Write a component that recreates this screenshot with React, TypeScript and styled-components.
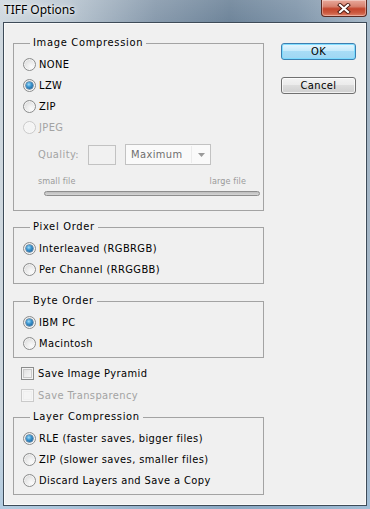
import React from 'react';
import styled, { createGlobalStyle } from 'styled-components';

const Global = createGlobalStyle`
  html, body { margin: 0; padding: 0; }
  body { width: 370px; height: 509px; overflow: hidden; background: #8a9db0; }
`;

const Window = styled.div`
  width: 370px;
  height: 509px;
  display: flex;
  flex-direction: column;
  box-sizing: border-box;
  background:
    linear-gradient(180deg, rgba(255,255,255,0.12) 0%, rgba(255,255,255,0) 30px),
    linear-gradient(90deg, #cfd8df 0%, #b8c5d0 18%, #8497aa 42%, #6a8197 62%, #7d93a8 80%, #a4b6c6 100%);
  font-family: "DejaVu Sans Condensed", "DejaVu Sans", sans-serif;
  font-stretch: condensed;
  font-size: 11px;
  letter-spacing: 0.4px;
  color: #000;
`;

const TitleBar = styled.div`
  height: 22px;
  display: flex;
  align-items: flex-start;
  flex: none;
`;

const Title = styled.div`
  font-family: "Noto Sans", sans-serif;
  font-stretch: normal;
  letter-spacing: 0;
  font-size: 12px;
  line-height: 20px;
  padding-left: 4px;
  color: #000;
  text-shadow: 0 0 6px rgba(255,255,255,0.9), 0 0 3px rgba(255,255,255,0.8);
  flex: 1;
`;

const CloseButton = styled.div`
  width: 46px;
  height: 17px;
  margin-right: 3px;
  box-sizing: border-box;
  border: 1px solid #5b2a22;
  border-top: none;
  border-radius: 0 0 4px 4px;
  background: linear-gradient(180deg, #e9a99b 0%, #d7826f 40%, #c4452c 55%, #cb5a40 80%, #e0826a 100%);
  box-shadow: inset 0 0 0 1px rgba(255,255,255,0.35);
  display: flex;
  align-items: center;
  justify-content: center;
`;

const Body = styled.div`
  flex: 1;
  display: flex;
  padding: 0 3px 3px 3px;
  background: linear-gradient(180deg, rgba(0,0,0,0) 0%, rgba(0,0,0,0) 80%, rgba(160,195,225,0.6) 100%);
`;

const Client = styled.div`
  flex: 1;
  display: flex;
  box-sizing: border-box;
  border: 1px solid #3e4b58;
  box-shadow: inset 0 0 0 1px #fafafa;
  background: #f0f0f0;
  padding: 13px 0 0 9px;
`;

const LeftCol = styled.div`
  width: 251px;
  display: flex;
  flex-direction: column;
`;

const RightCol = styled.div`
  margin-left: 17px;
  padding-top: 7px;
  display: flex;
  flex-direction: column;
  gap: 17px;
`;

const Button = styled.div<{ $default?: boolean }>`
  width: 75px;
  height: 17px;
  box-sizing: border-box;
  border-radius: 3px;
  border: 1px solid ${p => (p.$default ? '#3c7fb1' : '#707070')};
  background: ${p =>
    p.$default
      ? 'linear-gradient(180deg, #e8f6fd 0%, #c6eafb 45%, #a7dcf6 50%, #9fd6f2 100%)'
      : 'linear-gradient(180deg, #f3f3f3 0%, #ebebeb 45%, #dddddd 50%, #cfcfcf 100%)'};
  box-shadow: inset 0 0 0 1px ${p => (p.$default ? 'rgba(120,220,255,0.9)' : 'rgba(255,255,255,0.7)')};
  display: flex;
  align-items: center;
  justify-content: center;
  line-height: 13px;
`;

const Group = styled.fieldset<{ $gapTop?: number }>`
  margin: ${p => p.$gapTop ?? 0}px 0 0 0;
  padding: 0 0 0 9px;
  border: 1px solid #a3a3a3;
  min-width: 0;
`;

const Legend = styled.legend`
  margin-left: 7px;
  padding: 0 3px;
  line-height: 14px;
  height: 14px;
  letter-spacing: 0.7px;
`;

const Rows = styled.div<{ $bottom?: number }>`
  display: flex;
  flex-direction: column;
  padding-top: 4px;
  padding-bottom: ${p => p.$bottom ?? 3}px;
`;

const Row = styled.div<{ $disabled?: boolean }>`
  height: 21px;
  display: flex;
  align-items: center;
  gap: 3px;
  color: ${p => (p.$disabled ? '#a3a3a3' : '#000')};
  white-space: nowrap;
`;

const RadioOuter = styled.span<{ $disabled?: boolean }>`
  width: 13px;
  height: 13px;
  border-radius: 50%;
  box-sizing: border-box;
  flex: none;
  border: 1px solid ${p => (p.$disabled ? '#cacaca' : '#8b8c8c')};
  background: ${p =>
    p.$disabled
      ? '#f4f4f4'
      : 'radial-gradient(circle at 65% 70%, #fbfbfb 0%, #eeeeee 35%, #d2d2d2 100%)'};
  box-shadow: inset 0 0 0 1px ${p => (p.$disabled ? '#f7f7f7' : 'rgba(255,255,255,0.6)')};
  display: flex;
  align-items: center;
  justify-content: center;
`;

const RadioDot = styled.span`
  width: 7px;
  height: 7px;
  border-radius: 50%;
  background: radial-gradient(circle at 40% 35%, #9fdcf9 0%, #3a94cf 40%, #0f4f86 100%);
  box-shadow: 0 0 0 0.5px #1b4f7a;
`;

const CheckRows = styled.div`
  display: flex;
  flex-direction: column;
  padding-left: 8px;
  margin-top: 4px;
`;

const CheckRow = styled(Row)`
  height: 22px;
  gap: 4px;
`;

const CheckBox = styled.span<{ $disabled?: boolean }>`
  width: 13px;
  height: 13px;
  box-sizing: border-box;
  flex: none;
  border: 1px solid ${p => (p.$disabled ? '#cacaca' : '#8b8c8c')};
  background: ${p =>
    p.$disabled ? '#f4f4f4' : 'linear-gradient(135deg, #d9d9d9 0%, #ececec 50%, #fafafa 100%)'};
  box-shadow: inset 0 0 0 1px ${p => (p.$disabled ? '#f6f6f6' : '#f4f4f4')}, inset 0 0 0 2px ${p => (p.$disabled ? '#efefef' : '#c9c9c9')};
`;

const QualityRow = styled.div`
  display: flex;
  align-items: center;
  margin: 6px 0 0 15px;
  height: 21px;
  color: #a3a3a3;
`;

const QualityLabel = styled.span`
  width: 50px;
`;

const QualityInput = styled.span`
  width: 28px;
  height: 20px;
  box-sizing: border-box;
  border: 1px solid #c2c2c2;
  background: #f1f1f1;
`;

const Select = styled.div`
  margin-left: 9px;
  width: 86px;
  height: 21px;
  box-sizing: border-box;
  border: 1px solid #c2c2c2;
  background: #fafafa;
  display: flex;
  align-items: center;
  color: #6e6e6e;
`;

const SelectText = styled.span`
  flex: 1;
  padding-left: 5px;
  border-right: 1px solid #ececec;
  line-height: 17px;
`;

const SelectArrow = styled.span`
  width: 18px;
  display: flex;
  align-items: center;
  justify-content: center;
`;

const SliderArea = styled.div`
  margin: 10px 3px 14px 15px;
  display: flex;
  flex-direction: column;
`;

const SliderLabels = styled.div`
  display: flex;
  justify-content: space-between;
  margin-right: 14px;
  font-size: 9px;
  letter-spacing: 0.1px;
  line-height: 12px;
  color: #9a9a9a;
`;

const Track = styled.div`
  margin: 4px 0 0 6px;
  height: 5px;
  box-sizing: border-box;
  border: 1px solid #8d8d8d;
  border-radius: 3px;
  background: linear-gradient(180deg, #bdbdbd 0%, #d6d6d6 100%);
`;

type RadioItem = { label: string; checked?: boolean; disabled?: boolean };

const Radio: React.FC<RadioItem> = ({ label, checked, disabled }) => (
  <Row $disabled={disabled}>
    <RadioOuter $disabled={disabled}>{checked && <RadioDot />}</RadioOuter>
    <span>{label}</span>
  </Row>
);

const Check: React.FC<{ label: string; disabled?: boolean }> = ({ label, disabled }) => (
  <CheckRow $disabled={disabled}>
    <CheckBox $disabled={disabled} />
    <span>{label}</span>
  </CheckRow>
);

export default function App() {
  return (
    <>
      <Global />
      <Window>
        <TitleBar>
          <Title>TIFF Options</Title>
          <CloseButton>
            <svg width="14" height="11" viewBox="0 0 14 11">
              <path d="M3 2 L11 9 M11 2 L3 9" stroke="#4a1a12" strokeWidth="4" strokeLinecap="square" />
              <path d="M3 2 L11 9 M11 2 L3 9" stroke="#ffffff" strokeWidth="2.2" strokeLinecap="square" />
            </svg>
          </CloseButton>
        </TitleBar>
        <Body>
          <Client>
            <LeftCol>
              <Group>
                <Legend>Image Compression</Legend>
                <Rows $bottom={0}>
                  <Radio label="NONE" />
                  <Radio label="LZW" checked />
                  <Radio label="ZIP" />
                  <Radio label="JPEG" disabled />
                </Rows>
                <QualityRow>
                  <QualityLabel>Quality:</QualityLabel>
                  <QualityInput />
                  <Select>
                    <SelectText>Maximum</SelectText>
                    <SelectArrow>
                      <svg width="7" height="4" viewBox="0 0 7 4">
                        <path d="M0 0 H7 L3.5 4 Z" fill="#9a9a9a" />
                      </svg>
                    </SelectArrow>
                  </Select>
                </QualityRow>
                <SliderArea>
                  <SliderLabels>
                    <span>small file</span>
                    <span>large file</span>
                  </SliderLabels>
                  <Track />
                </SliderArea>
              </Group>
              <Group $gapTop={9}>
                <Legend>Pixel Order</Legend>
                <Rows>
                  <Radio label="Interleaved (RGBRGB)" checked />
                  <Radio label="Per Channel (RRGGBB)" />
                </Rows>
              </Group>
              <Group $gapTop={10}>
                <Legend>Byte Order</Legend>
                <Rows>
                  <Radio label="IBM PC" checked />
                  <Radio label="Macintosh" />
                </Rows>
              </Group>
              <CheckRows>
                <Check label="Save Image Pyramid" />
                <Check label="Save Transparency" disabled />
              </CheckRows>
              <Group $gapTop={4}>
                <Legend>Layer Compression</Legend>
                <Rows>
                  <Radio label="RLE (faster saves, bigger files)" checked />
                  <Radio label="ZIP (slower saves, smaller files)" />
                  <Radio label="Discard Layers and Save a Copy" />
                </Rows>
              </Group>
            </LeftCol>
            <RightCol>
              <Button $default>OK</Button>
              <Button>Cancel</Button>
            </RightCol>
          </Client>
        </Body>
      </Window>
    </>
  );
}
